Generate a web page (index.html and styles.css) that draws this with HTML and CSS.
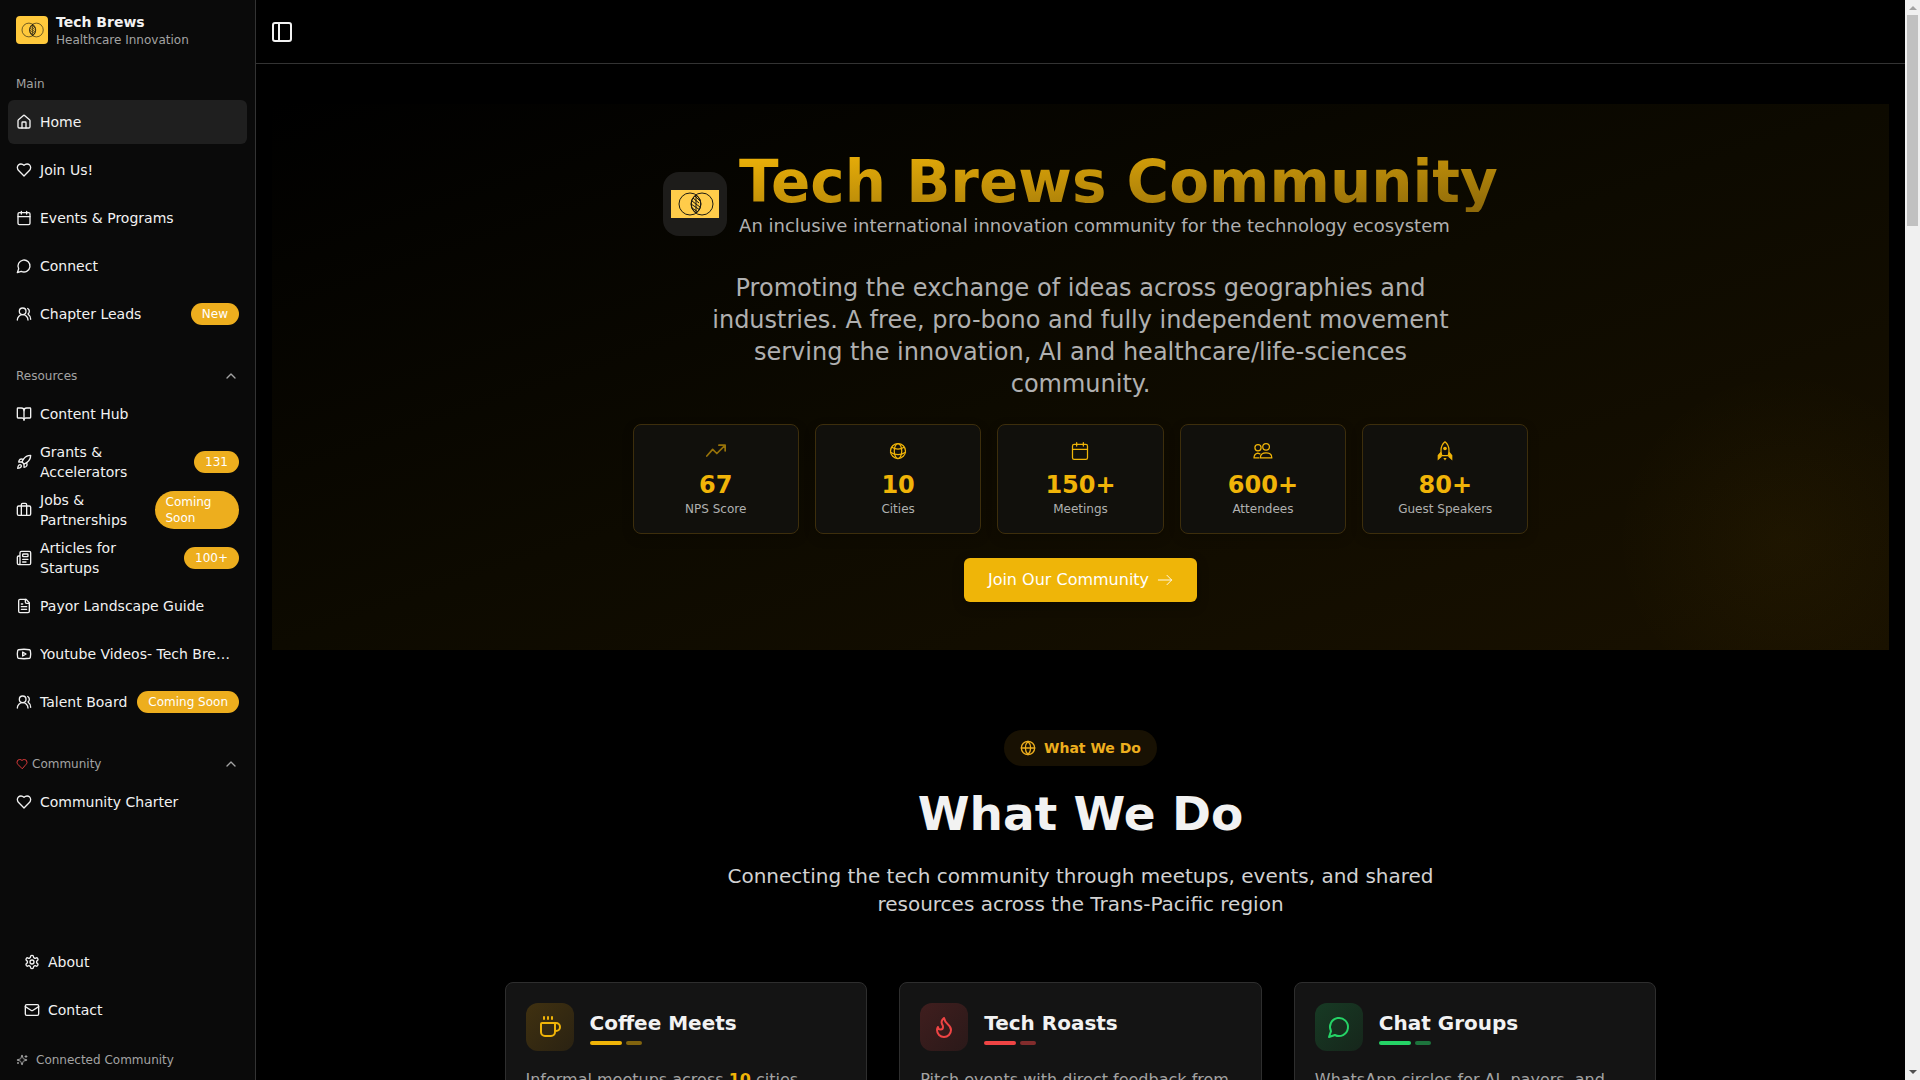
FILE: index.html
```html
<!DOCTYPE html>
<html lang="en">
<head>
    <meta charset="UTF-8">
    <meta name="viewport" content="width=device-width, initial-scale=1.0">
    <title>Tech Brews Community</title>
    <link rel="stylesheet" href="styles.css">
</head>
<body>
<!-- icon sprite -->
<svg class="sprite" aria-hidden="true">
    <symbol id="i-home" viewBox="0 0 24 24"><path d="M15 21v-8a1 1 0 0 0-1-1h-4a1 1 0 0 0-1 1v8"/><path d="M3 10a2 2 0 0 1 .709-1.528l7-5.999a2 2 0 0 1 2.582 0l7 5.999A2 2 0 0 1 21 10v9a2 2 0 0 1-2 2H5a2 2 0 0 1-2-2z"/></symbol>
    <symbol id="i-heart" viewBox="0 0 24 24"><path d="M19 14c1.49-1.46 3-3.21 3-5.5A5.5 5.5 0 0 0 16.5 3c-1.76 0-3 .5-4.5 2-1.5-1.5-2.74-2-4.5-2A5.5 5.5 0 0 0 2 8.5c0 2.3 1.5 4.05 3 5.5l7 7Z"/></symbol>
    <symbol id="i-calendar" viewBox="0 0 24 24"><path d="M8 2v4M16 2v4M3 10h18"/><rect width="18" height="18" x="3" y="4" rx="2"/></symbol>
    <symbol id="i-chat" viewBox="0 0 24 24"><path d="M7.9 20A9 9 0 1 0 4 16.1L2 22Z"/></symbol>
    <symbol id="i-users" viewBox="0 0 24 24"><path d="M18 21a8 8 0 0 0-16 0"/><circle cx="10" cy="8" r="5"/><path d="M22 20c0-3.37-2-6.5-4-8a5 5 0 0 0-.45-8.3"/></symbol>
    <symbol id="i-book" viewBox="0 0 24 24"><path d="M12 7v14"/><path d="M3 18a1 1 0 0 1-1-1V4a1 1 0 0 1 1-1h5a4 4 0 0 1 4 4 4 4 0 0 1 4-4h5a1 1 0 0 1 1 1v13a1 1 0 0 1-1 1h-6a3 3 0 0 0-3 3 3 3 0 0 0-3-3z"/></symbol>
    <symbol id="i-rocket" viewBox="0 0 24 24"><path d="M4.5 16.5c-1.5 1.26-2 5-2 5s3.74-.5 5-2c.71-.84.7-2.13-.09-2.91a2.18 2.18 0 0 0-2.91-.09z"/><path d="m12 15-3-3a22 22 0 0 1 2-3.95A12.88 12.88 0 0 1 22 2c0 2.72-.78 7.5-6 11a22.35 22.35 0 0 1-4 2z"/><path d="M9 12H4s.55-3.03 2-4c1.62-1.08 5 0 5 0M12 15v5s3.03-.55 4-2c1.08-1.62 0-5 0-5"/></symbol>
    <symbol id="i-case" viewBox="0 0 24 24"><path d="M16 20V4a2 2 0 0 0-2-2h-4a2 2 0 0 0-2 2v16"/><rect width="20" height="14" x="2" y="6" rx="2"/></symbol>
    <symbol id="i-news" viewBox="0 0 24 24"><path d="M15 18h-5M18 14h-8"/><path d="M4 22h16a2 2 0 0 0 2-2V4a2 2 0 0 0-2-2H8a2 2 0 0 0-2 2v16a2 2 0 0 1-4 0v-9a2 2 0 0 1 2-2h2"/><rect width="8" height="4" x="10" y="6" rx="1"/></symbol>
    <symbol id="i-file" viewBox="0 0 24 24"><path d="M15 2H6a2 2 0 0 0-2 2v16a2 2 0 0 0 2 2h12a2 2 0 0 0 2-2V7Z"/><path d="M14 2v4a2 2 0 0 0 2 2h4M10 9H8M16 13H8M16 17H8"/></symbol>
    <symbol id="i-youtube" viewBox="0 0 24 24"><path d="M2.5 17a24.12 24.12 0 0 1 0-10 2 2 0 0 1 1.4-1.4 49.56 49.56 0 0 1 16.2 0A2 2 0 0 1 21.5 7a24.12 24.12 0 0 1 0 10 2 2 0 0 1-1.4 1.4 49.55 49.55 0 0 1-16.2 0A2 2 0 0 1 2.5 17"/><path d="m10 15 5-3-5-3z"/></symbol>
    <symbol id="i-gear" viewBox="0 0 24 24"><path d="M12.22 2h-.44a2 2 0 0 0-2 2v.18a2 2 0 0 1-1 1.73l-.43.25a2 2 0 0 1-2 0l-.15-.08a2 2 0 0 0-2.73.73l-.22.38a2 2 0 0 0 .73 2.73l.15.1a2 2 0 0 1 1 1.72v.51a2 2 0 0 1-1 1.74l-.15.09a2 2 0 0 0-.73 2.73l.22.38a2 2 0 0 0 2.73.73l.15-.08a2 2 0 0 1 2 0l.43.25a2 2 0 0 1 1 1.73V20a2 2 0 0 0 2 2h.44a2 2 0 0 0 2-2v-.18a2 2 0 0 1 1-1.73l.43-.25a2 2 0 0 1 2 0l.15.08a2 2 0 0 0 2.73-.73l.22-.39a2 2 0 0 0-.73-2.73l-.15-.08a2 2 0 0 1-1-1.74v-.5a2 2 0 0 1 1-1.74l.15-.09a2 2 0 0 0 .73-2.73l-.22-.38a2 2 0 0 0-2.73-.73l-.15.08a2 2 0 0 1-2 0l-.43-.25a2 2 0 0 1-1-1.73V4a2 2 0 0 0-2-2z"/><circle cx="12" cy="12" r="3"/></symbol>
    <symbol id="i-mail" viewBox="0 0 24 24"><rect width="20" height="16" x="2" y="4" rx="2"/><path d="m22 7-8.97 5.7a1.94 1.94 0 0 1-2.06 0L2 7"/></symbol>
    <symbol id="i-sparkles" viewBox="0 0 24 24"><path d="M9.937 15.5A2 2 0 0 0 8.5 14.063l-6.135-1.582a.5.5 0 0 1 0-.962L8.5 9.936A2 2 0 0 0 9.937 8.5l1.582-6.135a.5.5 0 0 1 .963 0L14.063 8.5A2 2 0 0 0 15.5 9.937l6.135 1.581a.5.5 0 0 1 0 .964L15.5 14.063a2 2 0 0 0-1.437 1.437l-1.582 6.135a.5.5 0 0 1-.963 0z"/><path d="M20 3v4M22 5h-4M4 17v2M5 18H3"/></symbol>
    <symbol id="i-up" viewBox="0 0 24 24"><path d="m18 15-6-6-6 6"/></symbol>
    <symbol id="i-panel" viewBox="0 0 24 24"><rect width="18" height="18" x="3" y="3" rx="2"/><path d="M9 3v18"/></symbol>
    <symbol id="i-globe" viewBox="0 0 24 24"><circle cx="12" cy="12" r="10"/><path d="M12 2a14.5 14.5 0 0 0 0 20 14.5 14.5 0 0 0 0-20M2 12h20"/></symbol>
    <symbol id="i-trend" viewBox="0 0 24 24"><path d="M1 18 8 10l5 5L22.500 5.500M15.500 5H23v7"/></symbol>
    <symbol id="i-world" viewBox="0 0 24 24"><circle cx="12" cy="12" r="9"/><ellipse cx="12" cy="12" rx="4.500" ry="9"/><path d="M4.500 7.500c4.500 2.700 10.500 2.700 15 0M3 13.500c5.500 3.600 12.500 3.600 18 0"/></symbol>
    <symbol id="i-people" viewBox="0 0 24 24"><circle cx="15.700" cy="7" r="4"/><circle cx="6" cy="8" r="3.700"/><path d="M8.800 20.300h13.800c0-3.600-2.500-6-6.900-6s-6.900 2.400-6.900 6zM7 20.300H1.200c0-3.100 1.600-5.200 4.400-5.800l2.700 1"/></symbol>
    <symbol id="i-ship" viewBox="0 0 24 24"><path d="M12 1c-3 2.400-4.800 6.300-4.800 10.500 0 2.300.4 4.300 1 6h7.600c.6-1.700 1-3.700 1-6C16.800 7.300 15 3.400 12 1z"/><path class="solid" d="M7 12.500l-3.800 4.700V23.500l5-4.500zM17 12.500l3.800 4.700V23.500l-5-4.500zM10 20.500h4l-2 3z"/><circle class="solid" cx="12" cy="9" r="2.200"/></symbol>
    <symbol id="i-arrow" viewBox="0 0 24 24"><path d="M2 12h20M15 5l7 7-7 7"/></symbol>
    <symbol id="i-coffee" viewBox="0 0 24 24"><path d="M10 2v2M14 2v2M6 2v2M16 8a1 1 0 0 1 1 1v8a4 4 0 0 1-4 4H7a4 4 0 0 1-4-4V9a1 1 0 0 1 1-1h14a4 4 0 1 1 0 8h-1"/></symbol>
    <symbol id="i-flame" viewBox="0 0 24 24"><path d="M8.500 14.500A2.500 2.500 0 0 0 11 12c0-1.380-.5-2-1-3-1.072-2.143-.224-4.054 2-6 .5 2.500 2 4.900 4 6.500 2 1.600 3 3.500 3 5.500a7 7 0 1 1-14 0c0-1.153.433-2.294 1-3a2.500 2.500 0 0 0 2.500 2.500z"/></symbol>
    <symbol id="i-rings" viewBox="0 0 48 28">
        <circle cx="19" cy="14" r="11"/><circle cx="31" cy="14" r="11"/>
        <path d="M25 5v18M22 8l6 5M21 11l8 6M20 14l9 6M21 18l6 4M24 6l5 5"/>
        <path d="M25 5a11 11 0 0 1 0 18 11 11 0 0 1 0-18z"/>
    </symbol>
</svg>

<div class="layout">
    <aside class="sidebar">
        <div class="brand">
            <span class="brand-logo"><svg><use href="#i-rings"/></svg></span>
            <div>
                <div class="brand-name">Tech Brews</div>
                <div class="brand-sub">Healthcare Innovation</div>
            </div>
        </div>

        <nav class="menu">
            <div class="group">
                <div class="group-label">Main</div>
                <a href="#" class="item active"><svg class="icon"><use href="#i-home"/></svg><span>Home</span></a>
                <a href="#" class="item"><svg class="icon"><use href="#i-heart"/></svg><span>Join Us!</span></a>
                <a href="#" class="item"><svg class="icon"><use href="#i-calendar"/></svg><span>Events &amp; Programs</span></a>
                <a href="#" class="item"><svg class="icon"><use href="#i-chat"/></svg><span>Connect</span></a>
                <a href="#" class="item"><svg class="icon"><use href="#i-users"/></svg><span>Chapter Leads</span><span class="badge">New</span></a>
            </div>
            <div class="group">
                <button type="button" class="group-label">Resources<svg class="icon chevron"><use href="#i-up"/></svg></button>
                <a href="#" class="item"><svg class="icon"><use href="#i-book"/></svg><span>Content Hub</span></a>
                <a href="#" class="item"><svg class="icon"><use href="#i-rocket"/></svg><span>Grants &amp; Accelerators</span><span class="badge">131</span></a>
                <a href="#" class="item"><svg class="icon"><use href="#i-case"/></svg><span>Jobs &amp; Partnerships</span><span class="badge">Coming Soon</span></a>
                <a href="#" class="item"><svg class="icon"><use href="#i-news"/></svg><span>Articles for Startups</span><span class="badge">100+</span></a>
                <a href="#" class="item"><svg class="icon"><use href="#i-file"/></svg><span>Payor Landscape Guide</span></a>
                <a href="#" class="item"><svg class="icon"><use href="#i-youtube"/></svg><span class="truncate">Youtube Videos- Tech Brews Community</span></a>
                <a href="#" class="item"><svg class="icon"><use href="#i-users"/></svg><span class="nowrap">Talent Board</span><span class="badge nowrap">Coming Soon</span></a>
            </div>
            <div class="group">
                <button type="button" class="group-label"><svg class="icon small red"><use href="#i-heart"/></svg>Community<svg class="icon chevron"><use href="#i-up"/></svg></button>
                <a href="#" class="item"><svg class="icon"><use href="#i-heart"/></svg><span>Community Charter</span></a>
            </div>
        </nav>

        <div class="sidebar-footer">
            <a href="#" class="item"><svg class="icon"><use href="#i-gear"/></svg><span>About</span></a>
            <a href="#" class="item"><svg class="icon"><use href="#i-mail"/></svg><span>Contact</span></a>
        </div>
        <div class="connected"><svg class="icon small"><use href="#i-sparkles"/></svg>Connected Community</div>
    </aside>

    <div class="page">
        <header class="topbar">
            <button type="button" class="toggle" aria-label="Toggle sidebar"><svg class="icon"><use href="#i-panel"/></svg></button>
        </header>

        <main class="content">
            <section class="hero">
                <div class="hero-head">
                    <span class="hero-logo"><svg><use href="#i-rings"/></svg></span>
                    <div class="hero-text">
                        <h1>Tech Brews Community</h1>
                        <p>An inclusive international innovation community for the technology ecosystem</p>
                    </div>
                </div>
                <p class="hero-lead">Promoting the exchange of ideas across geographies and industries. A free, pro-bono and fully independent movement serving the innovation, AI and healthcare/life-sciences community.</p>
                <div class="stats">
                    <div class="stat"><svg class="icon dim"><use href="#i-trend"/></svg><strong>67</strong><span>NPS Score</span></div>
                    <div class="stat"><svg class="icon"><use href="#i-world"/></svg><strong>10</strong><span>Cities</span></div>
                    <div class="stat"><svg class="icon"><use href="#i-calendar"/></svg><strong>150+</strong><span>Meetings</span></div>
                    <div class="stat"><svg class="icon"><use href="#i-people"/></svg><strong>600+</strong><span>Attendees</span></div>
                    <div class="stat"><svg class="icon"><use href="#i-ship"/></svg><strong>80+</strong><span>Guest Speakers</span></div>
                </div>
                <a href="#" class="join">Join Our Community <svg class="icon"><use href="#i-arrow"/></svg></a>
            </section>

            <section class="what">
                <div class="pill"><svg class="icon"><use href="#i-globe"/></svg>What We Do</div>
                <h2>What We Do</h2>
                <p class="what-lead">Connecting the tech community through meetups, events, and shared resources across the Trans-Pacific region</p>
                <div class="cards">
                    <article class="card yellow">
                        <div class="card-head">
                            <span class="card-icon"><svg class="icon"><use href="#i-coffee"/></svg></span>
                            <div>
                                <h3>Coffee Meets</h3>
                                <div class="bars"><i></i><i></i></div>
                            </div>
                        </div>
                        <p>Informal meetups across <b>10</b> cities.</p>
                    </article>
                    <article class="card rose">
                        <div class="card-head">
                            <span class="card-icon"><svg class="icon"><use href="#i-flame"/></svg></span>
                            <div>
                                <h3>Tech Roasts</h3>
                                <div class="bars"><i></i><i></i></div>
                            </div>
                        </div>
                        <p>Pitch events with direct feedback from</p>
                    </article>
                    <article class="card green">
                        <div class="card-head">
                            <span class="card-icon"><svg class="icon"><use href="#i-chat"/></svg></span>
                            <div>
                                <h3>Chat Groups</h3>
                                <div class="bars"><i></i><i></i></div>
                            </div>
                        </div>
                        <p>WhatsApp circles for AI, payors, and</p>
                    </article>
                </div>
            </section>
        </main>
    </div>

    <div class="scrollbar" aria-hidden="true">
        <span class="arrow-up"></span>
        <span class="thumb"></span>
        <span class="arrow-down"></span>
    </div>
</div>
</body>
</html>
```
FILE: styles.css
```css
* {
    box-sizing: border-box;
}
body {
    margin: 0;
    background-color: #000;
    color: #f2f2f2;
    font-family: "DejaVu Sans", sans-serif;
    font-size: 16px;
    line-height: 24px;
}
h1, h2, h3, p {
    margin: 0;
}
a {
    color: inherit;
    text-decoration: none;
}
button {
    font-family: inherit;
    color: inherit;
    background: none;
    border: none;
    cursor: pointer;
}
.sprite {
    display: none;
}
.icon {
    width: 16px;
    height: 16px;
    flex-shrink: 0;
    fill: none;
    stroke: currentColor;
    stroke-width: 2;
    stroke-linecap: round;
    stroke-linejoin: round;
}
.icon.small {
    width: 12px;
    height: 12px;
}
.solid {
    fill: currentColor;
    stroke: none;
}
.layout {
    display: flex;
    height: 100vh;
    overflow: hidden;
}

/* sidebar */
.sidebar {
    width: 256px;
    flex-shrink: 0;
    display: flex;
    flex-direction: column;
    background-color: #0a0a0a;
    border-right: 1px solid #333;
}
.brand {
    display: flex;
    align-items: center;
    gap: 8px;
    padding: 12px 16px;
}
.brand-logo {
    display: flex;
    align-items: center;
    justify-content: center;
    width: 32px;
    height: 28px;
    background-color: #ffc93c;
    border-radius: 4px;
}
.brand-logo svg, .hero-logo svg {
    fill: none;
    stroke: #1c1a12;
}
.brand-logo svg {
    width: 30px;
    height: 18px;
    stroke-width: 1;
}
.brand-name {
    font-size: 14px;
    line-height: 20px;
    font-weight: bold;
}
.brand-sub {
    font-size: 12px;
    line-height: 16px;
    color: #a3a3a3;
}
.menu {
    flex: 1;
    display: flex;
    flex-direction: column;
    gap: 24px;
    padding: 8px;
}
.group {
    display: flex;
    flex-direction: column;
    gap: 4px;
}
.group-label {
    display: flex;
    align-items: center;
    gap: 4px;
    height: 32px;
    margin-bottom: -4px;
    padding: 0 8px;
    font-size: 12px;
    line-height: 16px;
    color: #a3a3a3;
}
.chevron {
    margin-left: auto;
}
.red {
    color: #dc3b3b;
}
.item {
    display: flex;
    align-items: center;
    gap: 8px;
    height: 44px;
    padding: 0 8px;
    border-radius: 6px;
    font-size: 14px;
    line-height: 20px;
}
.item.active {
    background-color: #1f1f1f;
}
.badge {
    margin-left: auto;
    padding: 3px 11px;
    border-radius: 20px;
    background-color: #edae1e;
    color: #fff;
    font-size: 12px;
    line-height: 16px;
}
.truncate {
    overflow: hidden;
    text-overflow: ellipsis;
    white-space: nowrap;
}
.nowrap {
    white-space: nowrap;
}
.sidebar-footer {
    display: flex;
    flex-direction: column;
    gap: 4px;
    padding: 0 16px;
}
.connected {
    display: flex;
    align-items: center;
    gap: 8px;
    padding: 20px 16px 12px;
    font-size: 12px;
    line-height: 16px;
    color: #a3a3a3;
}

/* main column */
.page {
    flex: 1;
    min-width: 0;
}
.topbar {
    display: flex;
    align-items: center;
    height: 64px;
    padding: 0 10px;
    border-bottom: 1px solid #333;
}
.toggle {
    display: flex;
    padding: 4px;
}
.toggle .icon {
    width: 24px;
    height: 24px;
}
.content {
    padding: 40px 16px;
}

/* hero */
.hero {
    display: flex;
    flex-direction: column;
    align-items: center;
    padding: 48px 16px;
    background: radial-gradient(circle 170px at calc(100% - 105px) calc(100% - 110px), rgba(238, 180, 8, 0.04), transparent),
        linear-gradient(to bottom right, #000, #0d0a00 50%, #191100);
}
.hero-head {
    display: flex;
    align-items: center;
    gap: 12px;
    margin-bottom: 16px;
}
.hero-logo {
    display: flex;
    align-items: center;
    justify-content: center;
    width: 64px;
    height: 64px;
    border-radius: 16px;
    background-color: #1d1c1a;
}
.hero-logo svg {
    width: 48px;
    height: 28px;
    background-color: #ffcc4a;
    stroke-width: 1;
}
.hero-text h1 {
    width: fit-content;
    font-size: 58px;
    line-height: 60px;
    background: linear-gradient(to bottom right, #f0b408, #8c680a);
    background-clip: text;
    -webkit-background-clip: text;
    color: transparent;
}
.hero-text p {
    margin-bottom: 16px;
    font-size: 18px;
    line-height: 28px;
    color: #b0b0b0;
}
.hero-lead {
    max-width: 768px;
    margin-bottom: 24px;
    font-size: 24px;
    line-height: 32px;
    text-align: center;
    color: #b0b0b0;
}
.stats {
    display: grid;
    grid-template-columns: repeat(5, 1fr);
    gap: 16px;
    width: 100%;
    max-width: 896px;
    margin-bottom: 24px;
}
.stat {
    display: flex;
    flex-direction: column;
    align-items: center;
    padding: 16px;
    border: 1px solid #3d2e0c;
    border-radius: 8px;
    background-color: #11100c;
    box-shadow: 0 4px 12px rgba(0, 0, 0, 0.2);
    color: #f0b408;
}
.stat .icon {
    width: 20px;
    height: 20px;
    stroke-width: 1.5;
}
.stat .dim {
    opacity: 0.6;
    stroke-width: 2;
}
.stat strong {
    margin-top: 8px;
    font-size: 24px;
    line-height: 32px;
}
.stat span {
    font-size: 12px;
    line-height: 16px;
    color: #b0b0b0;
}
.join {
    display: flex;
    align-items: center;
    gap: 8px;
    padding: 10px 24px;
    border-radius: 6px;
    background-color: #efb508;
    box-shadow: 0 4px 12px rgba(0, 0, 0, 0.3);
    color: #fff;
}
.join .icon {
    stroke-width: 1.5;
    opacity: 0.9;
}

/* what we do */
.what {
    display: flex;
    flex-direction: column;
    align-items: center;
    padding-top: 80px;
}
.pill {
    display: flex;
    align-items: center;
    gap: 8px;
    padding: 8px 16px;
    margin-bottom: 24px;
    border-radius: 20px;
    background-color: #181103;
    color: #edae1e;
    font-size: 14px;
    line-height: 20px;
    font-weight: bold;
}
.what h2 {
    margin-bottom: 24px;
    font-size: 47px;
    line-height: 48px;
}
.what-lead {
    max-width: 768px;
    margin-bottom: 64px;
    font-size: 20px;
    line-height: 28px;
    text-align: center;
    color: #d2d2d2;
}
.cards {
    display: grid;
    grid-template-columns: repeat(3, 1fr);
    gap: 32px;
    width: 100%;
    max-width: 1152px;
}
.card {
    padding: 20px;
    border: 1px solid #2e2e2e;
    border-radius: 8px;
    background-color: #141414;
}
.card-head {
    display: flex;
    align-items: center;
    gap: 16px;
    margin-bottom: 16px;
}
.card-icon {
    display: flex;
    align-items: center;
    justify-content: center;
    width: 48px;
    height: 48px;
    border-radius: 12px;
}
.card-icon .icon {
    width: 24px;
    height: 24px;
}
.card h3 {
    margin-bottom: 4px;
    font-size: 20px;
    line-height: 28px;
}
.bars {
    display: flex;
    gap: 4px;
}
.bars i {
    width: 32px;
    height: 4px;
    border-radius: 2px;
    background-color: currentColor;
}
.bars i + i {
    width: 16px;
    opacity: 0.5;
}
.card p {
    line-height: 26px;
    color: #a3a3a3;
}
.yellow .card-icon, .yellow .bars, .yellow b {
    color: #f0b408;
}
.yellow .card-icon {
    background: linear-gradient(to bottom right, #403110, #2a2212);
}
.rose .card-icon, .rose .bars {
    color: #ef4444;
}
.rose .card-icon {
    background: linear-gradient(to bottom right, #401e1e, #2a1919);
}
.green .card-icon, .green .bars {
    color: #25d366;
}
.green .card-icon {
    background: linear-gradient(to bottom right, #173a24, #16261b);
}

/* scrollbar */
.scrollbar {
    display: flex;
    flex-direction: column;
    align-items: center;
    width: 15px;
    padding: 6px 0;
    background-color: #f0f0f0;
}
.arrow-up, .arrow-down {
    border: 4px solid transparent;
}
.arrow-up {
    border-top: none;
    border-bottom-color: #a3a3a3;
}
.thumb {
    width: 11px;
    height: 211px;
    margin-top: 5px;
    background-color: #c1c1c1;
}
.arrow-down {
    margin-top: auto;
    border-bottom: none;
    border-top-color: #505050;
}
```
